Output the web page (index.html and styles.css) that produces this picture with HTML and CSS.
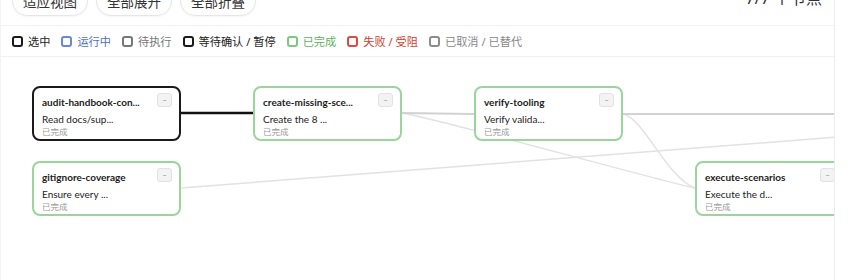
FILE: index.html
```html
<!DOCTYPE html>
<html lang="zh-CN">
<head>
  <meta charset="UTF-8" />
  <title>任务图</title>
  <link rel="stylesheet" href="styles.css">
</head>
<body>
  <div class="panel">
    <div class="toolbar">
      <button class="pill">适应视图</button>
      <button class="pill">全部展开</button>
      <button class="pill">全部折叠</button>
      <span class="count">7/7 个节点</span>
    </div>

    <div class="legend">
      <span class="item"><i class="box box-selected"></i>选中</span>
      <span class="item running"><i class="box box-running"></i>运行中</span>
      <span class="item pending"><i class="box box-pending"></i>待执行</span>
      <span class="item"><i class="box box-waiting"></i>等待确认 / 暂停</span>
      <span class="item done"><i class="box box-done"></i>已完成</span>
      <span class="item failed"><i class="box box-failed"></i>失败 / 受阻</span>
      <span class="item cancelled"><i class="box box-cancelled"></i>已取消 / 已替代</span>
    </div>

    <div class="canvas">
      <svg class="edges" width="850" height="230" viewBox="0 57 850 230">
        <path class="edge" d="M180 188 L850 136" />
        <path class="edge" d="M401 113 C 450 122, 640 176, 694 188" />
        <path class="edge" d="M621 114 C 642 116, 664 176, 694 188" />
        <path class="edge edge-strong" d="M401 113 L473 114" />
        <path class="edge edge-strong" d="M621 114 L850 114" />
        <path class="edge edge-active" d="M180 113 L252 113" />
      </svg>

      <div class="node selected" style="left: 31px; top: 29px;">
        <div class="node-title">audit-handbook-con...</div>
        <div class="node-desc">Read docs/sup...</div>
        <div class="node-status">已完成</div>
        <span class="fold">–</span>
      </div>
      <div class="node" style="left: 252px; top: 29px;">
        <div class="node-title">create-missing-sce...</div>
        <div class="node-desc">Create the 8 ...</div>
        <div class="node-status">已完成</div>
        <span class="fold">–</span>
      </div>
      <div class="node" style="left: 473px; top: 29px;">
        <div class="node-title">verify-tooling</div>
        <div class="node-desc">Verify valida...</div>
        <div class="node-status">已完成</div>
        <span class="fold">–</span>
      </div>
      <div class="node" style="left: 31px; top: 104px;">
        <div class="node-title">gitignore-coverage</div>
        <div class="node-desc">Ensure every ...</div>
        <div class="node-status">已完成</div>
        <span class="fold">–</span>
      </div>
      <div class="node" style="left: 694px; top: 104px;">
        <div class="node-title">execute-scenarios</div>
        <div class="node-desc">Execute the d...</div>
        <div class="node-status">已完成</div>
        <span class="fold">–</span>
      </div>
    </div>
  </div>
</body>
</html>
```

FILE: styles.css
```css
body {
  margin: 0;
  background: #fff;
  font-family: "Segoe UI", "Noto Sans", "Noto Sans CJK SC", sans-serif;
  color: #222;
  overflow: hidden;
}
.panel {
  width: 835px;
  height: 280px;
  box-sizing: border-box;
  border-left: 1px solid #f3f3f3;
  border-right: 1px solid #ececec;
  overflow: hidden;
}
.toolbar {
  display: flex;
  align-items: center;
  gap: 8px;
  margin-top: -18px;
  padding: 4px 12px 9px 11px;
  border-bottom: 1px solid #f2f2f2;
}
.pill {
  height: 30px;
  width: 76px;
  padding: 0;
  border: 1px solid #e6e6e6;
  border-radius: 15px;
  background: #fff;
  font-family: inherit;
  font-size: 13.5px;
  color: #333;
  box-shadow: 0 1px 2px rgba(0, 0, 0, 0.04);
}
.count {
  margin-left: auto;
  margin-right: 0;
  margin-top: -8px;
  font-size: 16px;
  color: #333;
}
.legend {
  display: flex;
  align-items: center;
  gap: 11px;
  height: 30px;
  padding: 0 11px;
  border-bottom: 1px solid #f2f2f2;
  font-size: 11.2px;
  color: #222;
}
.item {
  display: flex;
  align-items: center;
  gap: 5px;
}
.box {
  width: 11px;
  height: 11px;
  box-sizing: border-box;
  border: 2px solid #1a1a1a;
  border-radius: 3px;
}
.box-running { border-color: #6a86d8; }
.box-pending { border-color: #777; }
.box-done { border-color: #7cc97e; }
.box-failed { border-color: #dc4a40; }
.box-cancelled { border-color: #8c8c8c; }
.running { color: #4f6fc6; }
.pending { color: #777; }
.done { color: #5fb062; }
.failed { color: #d0402f; }
.cancelled { color: #888; }

.canvas {
  position: relative;
  height: 223px;
  overflow: hidden;
}
.edges {
  position: absolute;
  left: 0;
  top: 0;
}
.edge {
  fill: none;
  stroke: #e2e2e2;
  stroke-width: 1.5;
}
.edge-strong {
  stroke: #d2d2d2;
  stroke-width: 2.2;
}
.edge-active {
  stroke: #111;
  stroke-width: 2.5;
}
.node {
  position: absolute;
  width: 149px;
  height: 55px;
  box-sizing: border-box;
  padding: 7px 8px 0;
  border: 2px solid #9ad59b;
  border-radius: 8px;
  background: #fff;
  font-family: Lato, "Noto Sans", "Noto Sans CJK SC", sans-serif;
}
.node.selected {
  border-color: #1a1a1a;
}
.node-title {
  font-size: 10px;
  font-weight: 700;
  line-height: 15px;
  color: #1c1c1c;
}
.node-desc {
  margin-top: 3px;
  font-size: 10px;
  line-height: 13px;
  color: #222;
}
.node-status {
  font-family: "Noto Sans CJK SC", sans-serif;
  font-size: 8.5px;
  line-height: 11px;
  color: #999;
}
.fold {
  position: absolute;
  right: 7px;
  top: 5px;
  width: 15px;
  height: 14px;
  box-sizing: border-box;
  border: 1px solid #e2e2e2;
  border-radius: 3px;
  background: #f3f3f3;
  font-size: 8px;
  line-height: 12px;
  text-align: center;
  color: #888;
}
```
